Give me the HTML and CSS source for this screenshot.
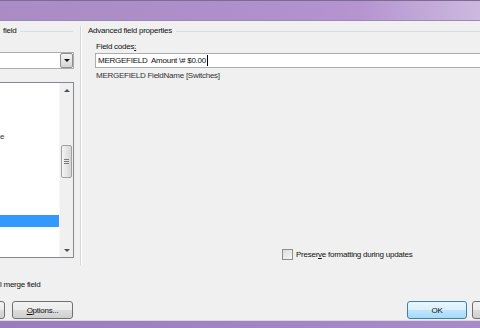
FILE: index.html
```html
<!DOCTYPE html>
<html lang="en">
<head>
  <meta charset="UTF-8">
  <meta name="viewport" content="width=device-width, initial-scale=1.0">
  <title>Insert Merge Field</title>
  <link rel="stylesheet" href="styles.css">
</head>
<body>
  <!-- Window caption -->
  <div class="titlebar"></div>

  <div class="dialog">
    <div class="panes">
      <!-- Field list (clipped on the left) -->
      <div class="left-pane">
        <div class="group-title"><span>field</span></div>
        <div class="combo">
          <div class="combo-btn"><span class="arrow-down"></span></div>
        </div>
        <div class="listbox">
          <div class="list-items">
            <div class="item"></div>
            <div class="item"></div>
            <div class="item"></div>
            <div class="item"></div>
            <div class="item">e</div>
            <div class="item"></div>
            <div class="item"></div>
            <div class="item"></div>
            <div class="item"></div>
            <div class="item"></div>
            <div class="item"></div>
            <div class="item selected"></div>
            <div class="item"></div>
          </div>
          <div class="scrollbar">
            <div class="scroll-arrow"><span class="tri-up"></span></div>
            <div class="track">
              <div class="thumb"><span></span><span></span><span></span></div>
            </div>
            <div class="scroll-arrow"><span class="tri-down"></span></div>
          </div>
        </div>
      </div>

      <div class="separator"></div>

      <!-- Advanced field properties -->
      <div class="right-pane">
        <div class="group-title"><span>Advanced field properties</span></div>
        <div class="field-label">Field codes<u>:</u></div>
        <div class="code-input">MERGEFIELD&nbsp; Amount \# $0.00<span class="caret"></span></div>
        <div class="hint">MERGEFIELD FieldName [Switches]</div>
        <label class="check">
          <span class="box"></span>
          <span>Preser<u>v</u>e formatting during updates</span>
        </label>
      </div>
    </div>

    <div class="note">l merge field</div>

    <div class="buttons">
      <button class="btn clipped"></button>
      <button class="btn options"><u>O</u>ptions...</button>
      <div class="fill"></div>
      <button class="btn ok">OK</button>
      <button class="btn cancel"></button>
    </div>
  </div>

  <div class="bottom-border"></div>
</body>
</html>
```

FILE: styles.css
```css
body {
  margin: 0;
  padding: 0;
  width: 480px;
  height: 328px;
  overflow: hidden;
  background-color: #f0f0f0;
  font-family: "Liberation Sans", Arial, sans-serif;
  font-size: 8px;
  letter-spacing: -0.25px;
  color: #111111;
}

/* Window caption */
.titlebar {
  height: 21px;
  box-sizing: border-box;
  background: linear-gradient(to right, #a98bc5, #ad8fcb 45%, #b594d0 75%, #cdb9df);
  border-top: 1px solid #7d6b92;
  border-bottom: 1px solid #9a8aab;
}
.bottom-border {
  height: 7px;
  border-top: 1px solid #dcd6e4;
  background: linear-gradient(to right, #9a7cba, #a184c2 50%, #a98bc8);
}

.dialog {
  height: 299px;
  display: flex;
  flex-direction: column;
}

/* Two panes */
.panes {
  display: flex;
  height: 245px;
  padding-top: 5px;
  box-sizing: border-box;
}
.left-pane {
  width: 74px;
  display: flex;
  flex-direction: column;
}
.separator {
  width: 1px;
  margin-left: 6px;
  height: 239px;
  background-color: #d5d5d5;
  border-right: 1px solid #ffffff;
}
.right-pane {
  flex: 1;
  display: flex;
  flex-direction: column;
  padding-left: 6px;
}

.group-title {
  height: 10px;
  line-height: 10px;
  display: flex;
  align-items: center;
  gap: 4px;
}
.left-pane .group-title {
  padding-left: 3px;
  padding-right: 1px;
}
.group-title::after {
  content: "";
  flex: 1;
  border-top: 1px solid #d5dfe5;
  margin-top: 1px;
}

/* Combo box */
.combo {
  margin-top: 16px;
  height: 17px;
  box-sizing: border-box;
  border: 1px solid #abadb3;
  border-left: none;
  background-color: #ffffff;
  display: flex;
  justify-content: flex-end;
}
.combo-btn {
  width: 13px;
  height: 15px;
  box-sizing: border-box;
  border: 1px solid #8e8f8f;
  border-radius: 2px;
  background: linear-gradient(#f2f2f2, #e6e6e6 50%, #d4d4d4);
  display: flex;
  align-items: center;
  justify-content: center;
}
.arrow-down {
  width: 0;
  height: 0;
  border-left: 3px solid transparent;
  border-right: 3px solid transparent;
  border-top: 3px solid #111111;
}

/* List box */
.listbox {
  margin-top: 13px;
  height: 176px;
  box-sizing: border-box;
  border: 1px solid #828790;
  border-left: none;
  background-color: #ffffff;
  display: flex;
  overflow: hidden;
}
.list-items {
  flex: 1;
}
.item {
  height: 12px;
  line-height: 12px;
  white-space: nowrap;
  color: #333333;
}
.item.selected {
  background-color: #3399ff;
}
.scrollbar {
  width: 13px;
  background-color: #f0f0f0;
  display: flex;
  flex-direction: column;
  border-left: 1px solid #f7f7f7;
}
.scroll-arrow {
  height: 14px;
  display: flex;
  align-items: center;
  justify-content: center;
}
.tri-up,
.tri-down {
  width: 0;
  height: 0;
  border-left: 3px solid transparent;
  border-right: 3px solid transparent;
}
.tri-up {
  border-bottom: 3px solid #505050;
}
.tri-down {
  border-top: 3px solid #505050;
}
.track {
  flex: 1;
  padding-top: 48px;
}
.thumb {
  height: 33px;
  margin: 0 1px;
  box-sizing: border-box;
  border: 1px solid #a0a0a0;
  border-radius: 2px;
  background: linear-gradient(to right, #f4f4f4, #e2e2e2 60%, #d6d6d6);
  display: flex;
  flex-direction: column;
  align-items: center;
  justify-content: center;
  gap: 1px;
}
.thumb span {
  width: 5px;
  height: 1px;
  background-color: #7a7a7a;
}

/* Right pane content */
.field-label {
  margin-top: 6px;
  margin-left: 8px;
  height: 10px;
  line-height: 10px;
}
.code-input {
  margin-top: 1px;
  margin-left: 7px;
  height: 15px;
  line-height: 13px;
  box-sizing: border-box;
  border: 1px solid #abadb3;
  border-right: none;
  background-color: #ffffff;
  padding-left: 2px;
  white-space: pre;
  display: flex;
  align-items: center;
}
.caret {
  display: inline-block;
  width: 1px;
  height: 11px;
  background-color: #000000;
  margin-left: 1px;
}
.hint {
  margin-top: 3px;
  margin-left: 8px;
  height: 10px;
  line-height: 10px;
  color: #333333;
}
.check {
  margin-top: auto;
  margin-bottom: 6px;
  margin-left: 194px;
  display: flex;
  align-items: center;
  gap: 3px;
  height: 11px;
}
.check .box {
  width: 11px;
  height: 11px;
  box-sizing: border-box;
  border: 1px solid #8f8f8f;
  background: linear-gradient(135deg, #dcdcdc, #f6f6f6);
}

/* Footer */
.note {
  margin-top: 13px;
  height: 11px;
  line-height: 11px;
}
.buttons {
  margin-top: 11px;
  display: flex;
  height: 18px;
}
.btn {
  height: 18px;
  box-sizing: border-box;
  border: 1px solid #707070;
  border-radius: 3px;
  background: linear-gradient(#f2f2f2, #ebebeb 50%, #dddddd 51%, #cfcfcf);
  font-family: "Liberation Sans", Arial, sans-serif;
  font-size: 8px;
  letter-spacing: -0.25px;
  color: #111111;
  padding: 0;
}
.btn.clipped {
  width: 60px;
  margin-left: -55px;
}
.btn.options {
  width: 61px;
  margin-left: 7px;
}
.fill {
  flex: 1;
}
.btn.ok {
  width: 60px;
  border-color: #3c7fb1;
  background: linear-gradient(#eaf6fd, #d9f0fc 50%, #bee6fd 51%, #a7d9f5);
}
.btn.cancel {
  width: 60px;
  margin-left: 5px;
  margin-right: -52px;
}
```
